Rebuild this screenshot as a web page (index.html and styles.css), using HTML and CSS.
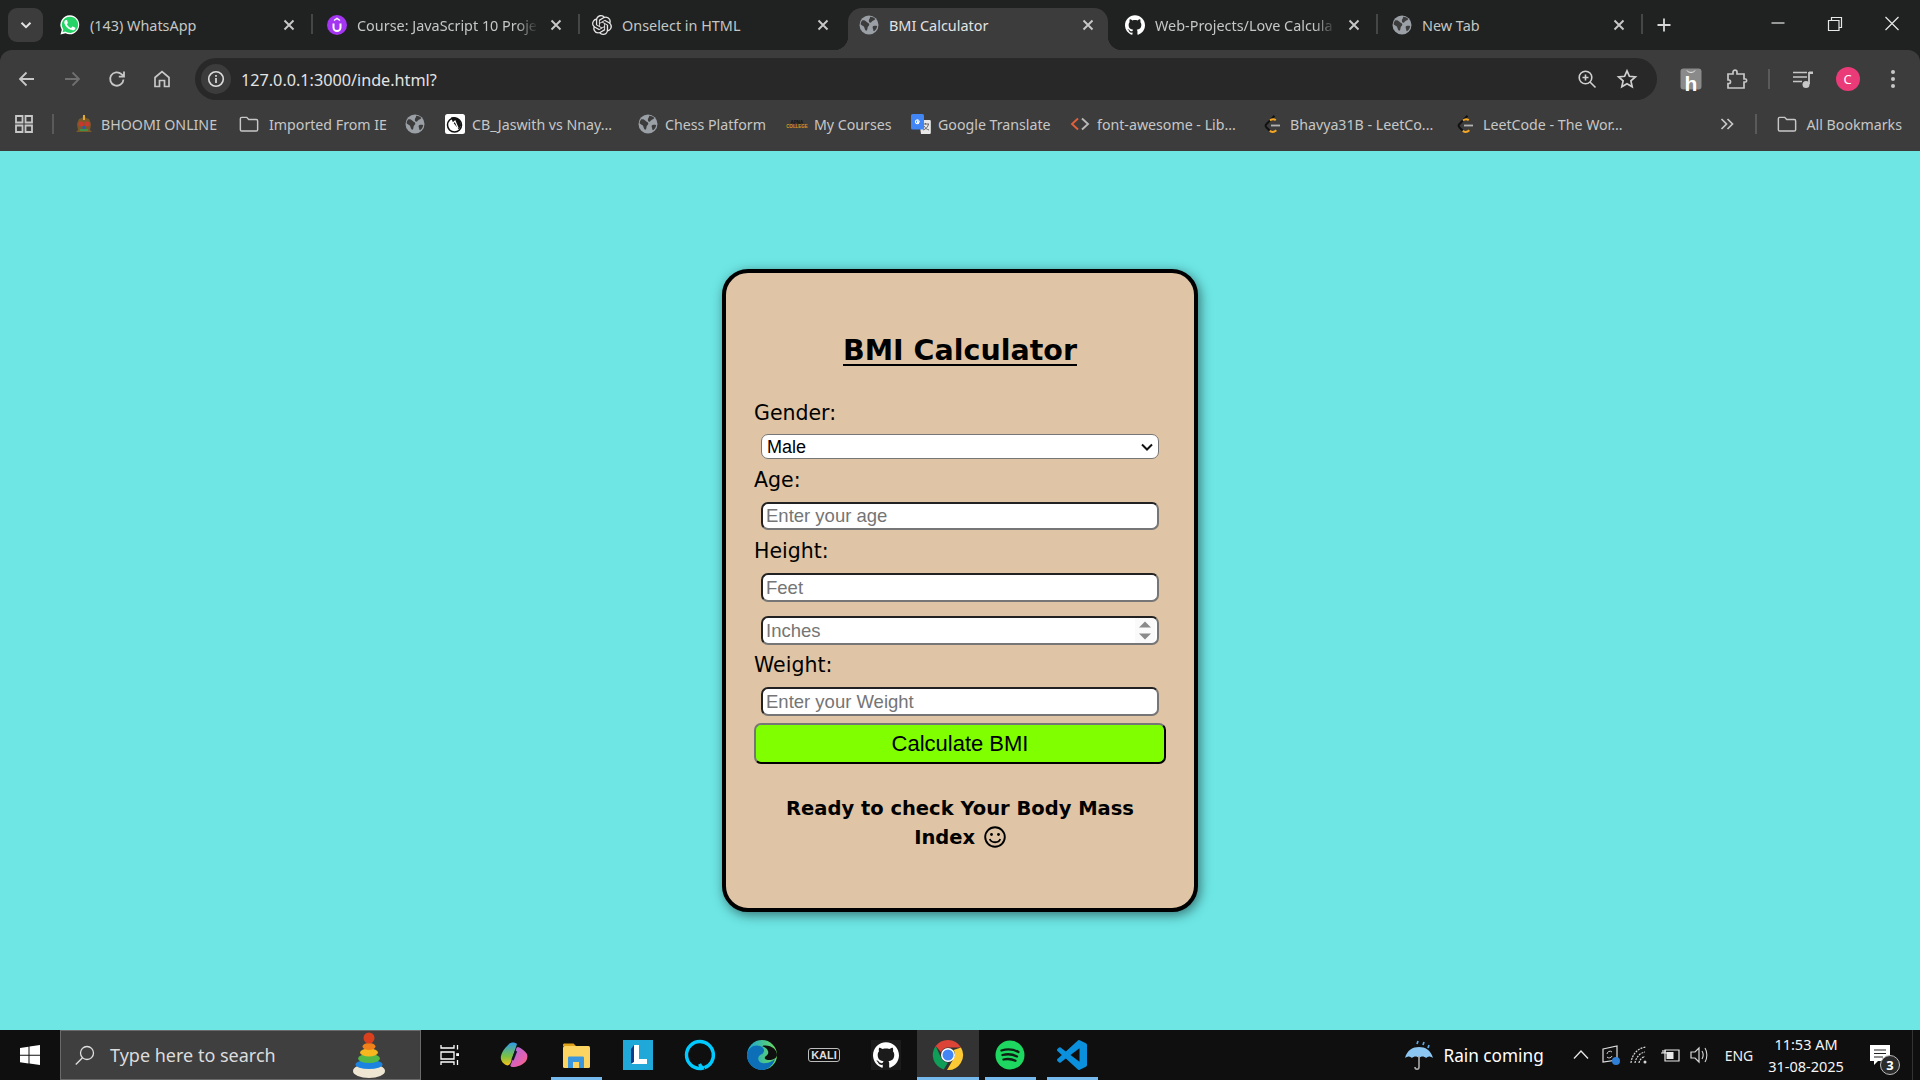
FILE: index.html
```html
<!DOCTYPE html>
<html lang="en">
<head>
<meta charset="utf-8">
<title>BMI Calculator</title>
<link rel="stylesheet" href="styles.css">
</head>
<body>
<svg class="defs" aria-hidden="true">
  <symbol id="globe" viewBox="0 0 20 20"><circle cx="10" cy="10" r="9.5" fill="#9aa0a6"/><path d="M3 5.500c2-.6 3.500.2 4.500 1.300 1 1.200 2.600 1.200 2.800 2.800.1 1.300-1.300 1.500-1.600 2.700-.3 1.400-.3 3.500-1.500 3.400-1.200-.3-1.500-2.300-2-3.500C4.800 10.800 2.500 10.500 1.600 9.200 1.700 7.800 2.200 6.600 3 5.500zM11 1.800c2 0 4 .8 5.300 2.200-.6 1.200-1.800 1.300-2.800 2-.9.600-1.200 1.900-2.300 1.700-1.100-.2-1.500-1.500-1.300-2.500.2-1.200 1.700-1.800 1.100-3.400zM14.500 11c1.500-.3 2.800-.2 3.700.2-.4 2.200-1.500 3.800-3.200 5.100-.9-.6-.7-1.900-1.100-2.900-.4-1-.4-2.200.6-2.400z" fill="#3c3c3c"/></symbol>
  <symbol id="close" viewBox="0 0 16 16"><path d="M3.500 3.500l9 9M12.500 3.500l-9 9" stroke="#c8c8c8" stroke-width="1.900" fill="none"/></symbol>
  <symbol id="folder" viewBox="0 0 22 20"><path d="M1.500 4.200c0-.9.600-1.500 1.500-1.500h5.500l2.200 2.400h8.300c.9 0 1.500.6 1.500 1.500v9.700c0 .9-.6 1.500-1.500 1.500H3c-.9 0-1.500-.6-1.500-1.500z" fill="none" stroke="#c7c7c7" stroke-width="1.600"/></symbol>
  <symbol id="leet" viewBox="0 0 20 20"><path d="M11.500 1.800L3.300 10.200c-.9 1-.9 2 0 3l3.300 3.300" fill="none" stroke="#111" stroke-width="2"/><path d="M7 6.500c1.500-1.400 3.800-1.700 5.800-.4M6.800 16.700c2 1.700 4.500 1.500 6.500-.5" fill="none" stroke="#f5a623" stroke-width="2"/><path d="M8 11.500h9" stroke="#b3b3b3" stroke-width="1.800"/></symbol>
</svg>

<header class="browser">
  <div class="tabstrip">
    <div class="tabmenu"><svg class="ic16" viewBox="0 0 16 16"><path d="M3.500 5.800L8 10.200l4.500-4.400" fill="none" stroke="#e3e3e3" stroke-width="2"/></svg></div>
    <div class="tab sep">
      <svg class="ic20" viewBox="0 0 20 20"><path d="M10 .300A9.500 9.500 0 0 0 1.800 14.700L.500 19.600l5-1.300A9.500 9.500 0 1 0 10 .300z" fill="#fff"/><path d="M10 1.700a8.100 8.100 0 0 0-6.900 12.400l.2.300-.8 2.900 3-.8.3.2A8.100 8.100 0 1 0 10 1.700z" fill="#25d366"/><path d="M7.100 5.400c-.2-.4-.4-.4-.6-.4h-.5c-.2 0-.5.100-.7.300-.3.300-1 1-1 2.300s1 2.700 1.100 2.900c.1.200 1.900 3 4.700 4.100 2.300.9 2.800.7 3.300.7.500-.1 1.600-.7 1.800-1.300.2-.6.2-1.200.2-1.300-.1-.1-.3-.2-.6-.3l-1.900-.9c-.3-.1-.5-.1-.7.200l-.9 1.100c-.2.200-.3.200-.6.100-.3-.1-1.200-.4-2.200-1.400-.8-.7-1.400-1.600-1.500-1.900-.2-.3 0-.4.100-.6l.4-.5.3-.5c.1-.2 0-.4 0-.5z" fill="#fff"/></svg>
      <span class="tab-title">(143) WhatsApp</span>
      <svg class="ic16"><use href="#close"/></svg>
    </div>
    <div class="tab sep">
      <svg class="ic20" viewBox="0 0 20 20"><circle cx="10" cy="10" r="10" fill="#a435f0"/><path d="M6.500 8.500v4a3.500 3.500 0 0 0 7 0v-4" fill="none" stroke="#fff" stroke-width="2"/><path d="M7 5.500L10 3.500l3 2" fill="none" stroke="#fff" stroke-width="1.500"/></svg>
      <span class="tab-title fade">Course: JavaScript 10 Proje</span>
      <svg class="ic16"><use href="#close"/></svg>
    </div>
    <div class="tab gpt">
      <svg class="ic20" viewBox="0 0 24 24"><path fill="#e6e6e6" d="M22.2819 9.8211a5.9847 5.9847 0 0 0-.5157-4.9108 6.0462 6.0462 0 0 0-6.5098-2.9A6.0651 6.0651 0 0 0 4.9807 4.1818a5.9847 5.9847 0 0 0-3.9977 2.9 6.0462 6.0462 0 0 0 .7427 7.0966 5.98 5.98 0 0 0 .511 4.9107 6.051 6.051 0 0 0 6.5146 2.9001A5.9847 5.9847 0 0 0 13.2599 24a6.0557 6.0557 0 0 0 5.7718-4.2058 5.9894 5.9894 0 0 0 3.9977-2.9001 6.0557 6.0557 0 0 0-.7475-7.0729zm-9.022 12.6081a4.4755 4.4755 0 0 1-2.8764-1.0408l.1419-.0804 4.7783-2.7582a.7948.7948 0 0 0 .3927-.6813v-6.7369l2.02 1.1686a.071.071 0 0 1 .038.052v5.5826a4.504 4.504 0 0 1-4.4945 4.4944zm-9.6607-4.1254a4.4708 4.4708 0 0 1-.5346-3.0137l.142.0852 4.783 2.7582a.7712.7712 0 0 0 .7806 0l5.8428-3.3685v2.3324a.0804.0804 0 0 1-.0332.0615L9.74 19.9502a4.4992 4.4992 0 0 1-6.1408-1.6464zM2.3408 7.8956a4.485 4.485 0 0 1 2.3655-1.9728V11.6a.7664.7664 0 0 0 .3879.6765l5.8144 3.3543-2.0201 1.1685a.0757.0757 0 0 1-.071 0l-4.8303-2.7865A4.504 4.504 0 0 1 2.3408 7.872zm16.5963 3.8558L13.1038 8.364 15.1192 7.2a.0757.0757 0 0 1 .071 0l4.8303 2.7913a4.4944 4.4944 0 0 1-.6765 8.1042v-5.6772a.79.79 0 0 0-.407-.667zm2.0107-3.0231l-.142-.0852-4.7735-2.7818a.7759.7759 0 0 0-.7854 0L9.409 9.2297V6.8974a.0662.0662 0 0 1 .0284-.0615l4.8303-2.7866a4.4992 4.4992 0 0 1 6.6802 4.66zM8.3065 12.863l-2.02-1.1638a.0804.0804 0 0 1-.038-.0567V6.0742a4.4992 4.4992 0 0 1 7.3757-3.4537l-.142.0805L8.704 5.459a.7948.7948 0 0 0-.3927.6813zm1.0976-2.3654l2.602-1.4998 2.6069 1.4998v2.9994l-2.5974 1.5L9.4041 13.5z"/></svg>
      <span class="tab-title">Onselect in HTML</span>
      <svg class="ic16"><use href="#close"/></svg>
    </div>
    <div class="tab active">
      <svg class="ic20"><use href="#globe"/></svg>
      <span class="tab-title">BMI Calculator</span>
      <svg class="ic16"><use href="#close"/></svg>
    </div>
    <div class="tab sep">
      <svg class="ic20" viewBox="0 0 24 24"><path fill="#fff" d="M12 .297c-6.630 0-12 5.373-12 12 0 5.303 3.438 9.800 8.205 11.385.600.113.820-.258.820-.577 0-.285-.010-1.040-.015-2.040-3.338.724-4.042-1.610-4.042-1.610C4.422 18.070 3.633 17.700 3.633 17.700c-1.087-.744.084-.729.084-.729 1.205.084 1.838 1.236 1.838 1.236 1.070 1.835 2.809 1.305 3.495.998.108-.776.417-1.305.760-1.605-2.665-.300-5.466-1.332-5.466-5.930 0-1.310.465-2.380 1.235-3.220-.135-.303-.540-1.523.105-3.176 0 0 1.005-.322 3.300 1.230.960-.267 1.980-.399 3-.405 1.020.006 2.040.138 3 .405 2.280-1.552 3.285-1.230 3.285-1.230.645 1.653.240 2.873.120 3.176.765.840 1.230 1.910 1.230 3.220 0 4.610-2.805 5.625-5.475 5.920.420.360.810 1.096.810 2.220 0 1.606-.015 2.896-.015 3.286 0 .315.210.690.825.570C20.565 22.092 24 17.592 24 12.297c0-6.627-5.373-12-12-12"/></svg>
      <span class="tab-title fade">Web-Projects/Love Calcula</span>
      <svg class="ic16"><use href="#close"/></svg>
    </div>
    <div class="tab sep last">
      <svg class="ic20"><use href="#globe"/></svg>
      <span class="tab-title">New Tab</span>
      <svg class="ic16"><use href="#close"/></svg>
    </div>
    <div class="newtab"><svg class="ic16" viewBox="0 0 16 16"><path d="M8 1.500v13M1.500 8h13" stroke="#d8d8d8" stroke-width="1.800"/></svg></div>
    <div class="winctl">
      <span class="wbtn"><svg class="ic16" viewBox="0 0 16 16"><path d="M1.500 7h13" stroke="#e8e8e8" stroke-width="1.200"/></svg></span>
      <span class="wbtn"><svg class="ic16" viewBox="0 0 16 16"><path d="M1.500 4.500h10.500v10H1.500zM4.500 4.500V1.500h10v10h-2.500" fill="none" stroke="#e8e8e8" stroke-width="1.200"/></svg></span>
      <span class="wbtn"><svg class="ic16" viewBox="0 0 16 16"><path d="M1.500 1l13 13M14.500 1l-13 13" stroke="#e8e8e8" stroke-width="1.200"/></svg></span>
    </div>
  </div>

  <div class="toolbar">
    <div class="nav">
      <span class="navbtn"><svg class="ic20" viewBox="0 0 20 20"><path d="M17 10H3.500M9.500 3.500L3 10l6.500 6.500" fill="none" stroke="#c7c7c7" stroke-width="1.800"/></svg></span>
      <span class="navbtn"><svg class="ic20" viewBox="0 0 20 20"><path d="M3 10h13.500M10.500 3.500L17 10l-6.500 6.500" fill="none" stroke="#6f6f6f" stroke-width="1.800"/></svg></span>
      <span class="navbtn"><svg class="ic20" viewBox="0 0 20 20"><path d="M16.500 10.500a6.700 6.700 0 1 1-2-5.300l2.500 2.300M17 2.500v5.200h-5.200" fill="none" stroke="#c7c7c7" stroke-width="1.800"/></svg></span>
      <span class="navbtn"><svg class="ic20" viewBox="0 0 20 20"><path d="M3 8.500L10 2.500l7 6v9h-4.500v-6h-5v6H3z" fill="none" stroke="#c7c7c7" stroke-width="1.700"/></svg></span>
    </div>
    <div class="urlbar">
      <span class="chip"><svg class="ic18" viewBox="0 0 18 18"><circle cx="9" cy="9" r="7.300" fill="none" stroke="#dcdcdc" stroke-width="1.600"/><path d="M9 8v5M9 5v1.700" stroke="#dcdcdc" stroke-width="1.700"/></svg></span>
      <span class="url">127.0.0.1:3000/inde.html?</span>
      <span class="urlbtn"><svg class="ic20" viewBox="0 0 20 20"><circle cx="8.500" cy="8.500" r="6.300" fill="none" stroke="#d0d0d0" stroke-width="1.600"/><path d="M13 13l5.500 5.500M8.500 5.500v6M5.500 8.500h6" stroke="#d0d0d0" stroke-width="1.600"/></svg></span>
      <span class="urlbtn"><svg class="ic20" viewBox="0 0 20 20"><path d="M10 1.800l2.400 5.500 6 .6-4.500 4 1.300 5.900L10 14.800l-5.200 3 1.300-5.900-4.500-4 6-.6z" fill="none" stroke="#d0d0d0" stroke-width="1.700"/></svg></span>
    </div>
    <div class="tools">
      <span class="toolbtn"><svg class="ic20x" viewBox="0 0 22 22"><rect width="21" height="21" x=".5" y=".5" rx="3" fill="#8a8a8a"/><path d="M7 2.500c1 2.500 7 2.500 8 0" fill="none" stroke="#eee" stroke-width="1"/><text x="11" y="23" class="hglyph">h</text></svg></span>
      <span class="toolbtn"><svg class="ic20x" viewBox="0 0 22 22"><path d="M2 6h5V4c0-2.500 4-2.500 4 0v2h7v5h1.500c1.500 0 1.500 3 0 3H18v6H2v-4.500h1c2 0 2-3.500 0-3.500H2z" fill="none" stroke="#c7c7c7" stroke-width="1.700"/></svg></span>
      <span class="toolsep"></span>
      <span class="toolbtn narrow"><svg class="ic20x" viewBox="0 0 22 22"><path d="M1 4.500h14M1 9h14M1 13.500h9" stroke="#c7c7c7" stroke-width="1.700"/><path d="M17 4v12" stroke="#c7c7c7" stroke-width="1.800"/><circle cx="14" cy="16.500" r="3.500" fill="#c7c7c7"/><path d="M17 3.500h4v2.500h-4z" fill="#c7c7c7"/></svg></span>
      <span class="toolbtn narrow"><span class="avatar">C</span></span>
      <span class="toolbtn narrow"><svg class="ic20x" viewBox="0 0 22 22"><circle cx="11" cy="4" r="2" fill="#c7c7c7"/><circle cx="11" cy="11" r="2" fill="#c7c7c7"/><circle cx="11" cy="18" r="2" fill="#c7c7c7"/></svg></span>
    </div>
  </div>

  <div class="bookmarks">
    <svg class="ic18 apps" viewBox="0 0 18 18"><path d="M1 1h6.500v6.500H1zM10.500 1H17v6.500h-6.500zM1 10.500h6.500V17H1zM10.500 10.500H17V17h-6.500z" fill="none" stroke="#c7c7c7" stroke-width="1.800"/></svg>
    <span class="bmsep"></span>
    <div class="bmlist">
      <span class="bm"><svg class="ic20" viewBox="0 0 20 20"><path d="M10 1l2 3 3 1 2 5-1 6 2 2H2l2-2-1-6 2-5 3-1z" fill="#7b5a2a"/><circle cx="7" cy="10" r="2.500" fill="#c8382e"/><circle cx="13" cy="10" r="2.500" fill="#c8382e"/><path d="M10 1v5" stroke="#e0a93a" stroke-width="2"/><path d="M6 16h8" stroke="#3f8f46" stroke-width="2"/><path d="M8.500 12h3v3h-3z" fill="#2f5aa8"/></svg><span>BHOOMI ONLINE</span></span>
      <span class="bm wide"><svg class="ic20"><use href="#folder"/></svg><span>Imported From IE</span></span>
      <span class="bm"><svg class="ic20"><use href="#globe"/></svg></span>
      <span class="bm"><svg class="ic20" viewBox="0 0 20 20"><rect width="20" height="20" rx="2.500" fill="#fff"/><circle cx="9.500" cy="11" r="7" fill="none" stroke="#111" stroke-width="1.500"/><path d="M6 3.500c5-2 10 2 10 8l-2 4-6-7z" fill="#111"/><path d="M6 11l4-4 3 7" fill="none" stroke="#fff" stroke-width="1.200"/></svg><span>CB_Jaswith vs Nnay...</span></span>
      <span class="bm"><svg class="ic20"><use href="#globe"/></svg><span>Chess Platform</span></span>
      <span class="bm"><svg class="ic20" viewBox="0 0 20 20"><text x="10" y="9.500" class="apna dark">APNA</text><text x="10" y="14" class="apna">COLLEGE</text></svg><span>My Courses</span></span>
      <span class="bm"><svg class="ic20" viewBox="0 0 20 20"><path d="M8 6h10.500c.8 0 1.300.5 1.300 1.300v11.400c0 .8-.5 1.300-1.300 1.300H10z" fill="#e8e8e8"/><path d="M11 10h7M14.500 9v1.500M12 16c3-1 5-3 5.500-6M13 12c1 2 3 3.500 5 4" stroke="#666" stroke-width="1" fill="none"/><rect width="13" height="15.500" rx="1.500" fill="#4285f4"/><path d="M9 7.200H6.500v1.300h1.300c-.2.800-.8 1.200-1.400 1.200a1.900 1.900 0 1 1 1.200-3.300" fill="none" stroke="#fff" stroke-width="1.100"/></svg><span>Google Translate</span></span>
      <span class="bm"><svg class="ic20" viewBox="0 0 20 20"><path d="M8 4.500L2 10l6 5.500" fill="none" stroke="#e2603a" stroke-width="1.900"/><path d="M12 4.500l6 5.500-6 5.500" fill="none" stroke="#b9b9b9" stroke-width="1.900"/></svg><span>font-awesome - Lib...</span></span>
      <span class="bm"><svg class="ic20"><use href="#leet"/></svg><span>Bhavya31B - LeetCo...</span></span>
      <span class="bm"><svg class="ic20"><use href="#leet"/></svg><span>LeetCode - The Wor...</span></span>
    </div>
    <svg class="ic16 more" viewBox="0 0 16 16"><path d="M2.500 3l5 5-5 5M8.500 3l5 5-5 5" fill="none" stroke="#c7c7c7" stroke-width="1.700"/></svg>
    <span class="bmsep end"></span>
    <span class="bm all"><svg class="ic20"><use href="#folder"/></svg><span>All Bookmarks</span></span>
  </div>
</header>

<main class="page">
  <section class="card">
    <h1 class="title">BMI Calculator</h1>
    <label class="lbl first" for="gender">Gender:</label>
    <select class="sel" id="gender"><option>Male</option><option>Female</option></select>
    <label class="lbl lbl-a" for="age">Age:</label>
    <input class="inp" id="age" type="number" placeholder="Enter your age">
    <label class="lbl lbl-h" for="feet">Height:</label>
    <input class="inp" id="feet" type="number" placeholder="Feet">
    <input class="inp inches" type="number" placeholder="Inches">
    <label class="lbl lbl-w" for="weight">Weight:</label>
    <input class="inp" id="weight" type="number" placeholder="Enter your Weight">
    <button class="calc" type="button">Calculate BMI</button>
    <p class="msg">Ready to check Your Body Mass Index <svg class="smile" viewBox="0 0 22 22"><circle cx="11" cy="11" r="9.800" fill="none" stroke="#000" stroke-width="1.900"/><circle cx="7.500" cy="8.500" r="1.400"/><circle cx="14.500" cy="8.500" r="1.400"/><path d="M5.800 13c1.500 4.300 9 4.300 10.400 0" fill="none" stroke="#000" stroke-width="1.800"/></svg></p>
  </section>
</main>

<footer class="taskbar">
  <span class="start"><svg class="ic20" viewBox="0 0 20 20"><path d="M0 3l8.500-1.300v8H0zM9.500 1.500L20 0v9.700H9.500zM0 10.700h8.500v7.800L0 17.200zM9.500 10.700H20V20L9.500 18.500z" fill="#fff"/></svg></span>
  <div class="search">
    <svg class="ic20" viewBox="0 0 20 20"><circle cx="12" cy="8" r="6.500" fill="none" stroke="#e0e0e0" stroke-width="1.300"/><path d="M7.500 12.700L.8 19.500" stroke="#e0e0e0" stroke-width="1.300"/></svg>
    <span class="search-text">Type here to search</span>
    <svg class="toy" viewBox="0 0 32 46"><ellipse cx="16" cy="39" rx="16" ry="7" fill="#eee6d2"/><ellipse cx="16" cy="32.500" rx="13.500" ry="4.500" fill="#1c84e0"/><ellipse cx="16" cy="26.500" rx="11" ry="4.500" fill="#53b848"/><ellipse cx="16" cy="20.500" rx="9" ry="4" fill="#f6b81e"/><ellipse cx="16" cy="14.500" rx="6.500" ry="3.500" fill="#f08019"/><circle cx="16" cy="6" r="5.500" fill="#d9411e"/></svg>
  </div>
  <div class="apps-row">
    <span class="tb taskview"><svg class="ic20" viewBox="0 0 20 20"><path d="M1 7h13v7H1zM1 0v3h13V0M1 20v-3h13v3M17.500 0v4.500M17.500 15v5" fill="none" stroke="#fff" stroke-width="1.300"/><rect x="16.200" y="8.200" width="2.800" height="2.800" fill="#fff"/></svg></span>
    <span class="tb"><svg class="ic28" viewBox="0 0 28 28"><defs><linearGradient id="cp1" x1="0" y1="0" x2="0" y2="1"><stop offset="0" stop-color="#2f9be8"/><stop offset=".6" stop-color="#7ac143"/><stop offset="1" stop-color="#f6c21c"/></linearGradient><linearGradient id="cp2" x1="0" y1="0" x2="1" y2="1"><stop offset="0" stop-color="#a56be8"/><stop offset=".7" stop-color="#e85fa8"/><stop offset="1" stop-color="#f57a3a"/></linearGradient></defs><path d="M9 3c2-2 6-2 8 0l-6 18c-1 3-3 4-5 3-3-1-6-5-5-9C2 10 6 6 9 3z" fill="url(#cp1)"/><path d="M18 6c3 1 7 4 9 7 1 3 0 7-3 9-2 2-7 4-11 4-3 0-3-2-2-3l5-14c0-2 1-3 2-3z" fill="url(#cp2)"/><path d="M16 10l-3.500 9" stroke="#16162a" stroke-width="2.400"/></svg></span>
    <span class="tb run inset"><svg class="ic28" viewBox="0 0 28 28"><path d="M1 4c0-1 .5-1.500 1.500-1.500h9L14 5h-13z" fill="#e0a21b"/><rect x="1" y="5" width="27" height="22" rx="1.500" fill="#fcd462"/><path d="M6 27V17c0-1 .5-1.500 1.500-1.500h13c1 0 1.500.5 1.500 1.500v10h-5v-6h-6v6z" fill="#3a96dd"/></svg></span>
    <span class="tb"><svg class="ic30" viewBox="0 0 30 30"><rect width="30" height="30" fill="#20a8d8"/><path d="M8 24l3-2V5L8 9z" fill="#123a8a"/><path d="M11 5h5v14h8v5H8l3-2z" fill="#fff"/></svg></span>
    <span class="tb"><svg class="ic30" viewBox="0 0 30 30"><path d="M15 1.500a13.500 13.500 0 1 0 0 27c.8 0 2-.2 2-.2l-2.500-4.300" fill="none" stroke="#00caff" stroke-width="3.400"/><path d="M15 1.500a13.500 13.500 0 0 1 4.500 26.200" fill="none" stroke="#00caff" stroke-width="3.400"/><path d="M13.500 24l5 4.500 2-1.500z" fill="#00caff"/></svg></span>
    <span class="tb"><svg class="ic30" viewBox="0 0 30 30"><defs><linearGradient id="edg" x1="0" y1="0" x2="1" y2="0"><stop offset="0" stop-color="#1aa5d8"/><stop offset="1" stop-color="#6bdc5a"/></linearGradient></defs><circle cx="15" cy="15" r="15" fill="url(#edg)"/><path d="M0 15C1 7 8 4 13 6c5 2 5 6 2 8-3 1-5 4-3 7 2 3 8 3 13 0l3-2c-2 7-8 11-13 11C7 30 0 23 0 15z" fill="#0c6fb8"/><path d="M30 15c0 3-4 5-8 5-3 0-5-1-4-3 2-2 4-3 3-6-1-3-4-4-6-5 8-2 15 3 15 9z" fill="#0f0f0f"/></svg></span>
    <span class="tb"><span class="kali">KALI</span></span>
    <span class="tb"><span class="ghbox"><svg class="ic26" viewBox="0 0 24 24"><path fill="#fff" d="M12 .297c-6.630 0-12 5.373-12 12 0 5.303 3.438 9.800 8.205 11.385.600.113.820-.258.820-.577 0-.285-.010-1.040-.015-2.040-3.338.724-4.042-1.610-4.042-1.610C4.422 18.070 3.633 17.700 3.633 17.700c-1.087-.744.084-.729.084-.729 1.205.084 1.838 1.236 1.838 1.236 1.070 1.835 2.809 1.305 3.495.998.108-.776.417-1.305.760-1.605-2.665-.300-5.466-1.332-5.466-5.930 0-1.310.465-2.380 1.235-3.220-.135-.303-.540-1.523.105-3.176 0 0 1.005-.322 3.300 1.230.960-.267 1.980-.399 3-.405 1.020.006 2.040.138 3 .405 2.280-1.552 3.285-1.230 3.285-1.230.645 1.653.240 2.873.120 3.176.765.840 1.230 1.910 1.230 3.220 0 4.610-2.805 5.625-5.475 5.920.420.360.810 1.096.810 2.220 0 1.606-.015 2.896-.015 3.286 0 .315.210.690.825.570C20.565 22.092 24 17.592 24 12.297c0-6.627-5.373-12-12-12"/></svg></span></span>
    <span class="tb run current"><svg class="ic30" viewBox="0 0 30 30"><path d="M15 0a15 15 0 0 1 13 7.500H15a7.500 7.500 0 0 0-7 4.800L2.700 6A15 15 0 0 1 15 0z" fill="#db4437"/><path d="M2.700 6L8.500 18.800A7.500 7.500 0 0 0 15 22.500L10.700 29.400A15 15 0 0 1 2.700 6z" fill="#0f9d58"/><path d="M28 7.500A15 15 0 0 1 14 30l6.500-11.200A7.500 7.500 0 0 0 20.500 10z" fill="#fcc934"/><circle cx="15" cy="15" r="7" fill="#fff"/><circle cx="15" cy="15" r="5.500" fill="#4285f4"/></svg></span>
    <span class="tb run inset"><svg class="ic30" viewBox="0 0 30 30"><circle cx="15" cy="15" r="14.500" fill="#1ed760"/><path d="M6.500 10.500c6-1.700 12-1.200 17 1.500M7.500 15c5-1.300 10-.9 14.500 1.400M8.500 19.500c4.500-1 8-.7 12 1.200" fill="none" stroke="#0f1f14" stroke-width="2.300" stroke-linecap="round"/></svg></span>
    <span class="tb run inset"><svg class="ic30" viewBox="0 0 24 24"><path fill="#0a90dc" d="M23.150 2.587L18.210.21a1.494 1.494 0 0 0-1.705.29l-9.460 8.630-4.120-3.128a.999.999 0 0 0-1.276.057L.327 7.261A1 1 0 0 0 .326 8.740L3.899 12 .326 15.260a1 1 0 0 0 .001 1.479L1.650 17.940a.999.999 0 0 0 1.276.057l4.120-3.128 9.460 8.630a1.492 1.492 0 0 0 1.704.290l4.942-2.377A1.500 1.500 0 0 0 24 20.060V3.939a1.500 1.500 0 0 0-.850-1.352zm-5.146 14.861L10.826 12l7.178-5.448v10.896z"/></svg></span>
  </div>
  <div class="sys">
    <span class="weather"><svg class="umb" viewBox="0 0 30 32"><path d="M1 19C3 11 9 8 15 8s12 3 14 11c-3-2-5-2-7 0-2-2-5-2-7 0-2-2-5-2-7 0-2-2-4-2-7 0z" fill="#8cc6f2"/><path d="M15 17v11c0 3-4 3-4 0" fill="none" stroke="#aaa" stroke-width="1.600"/><path d="M13 5l1-3M19 6l1-3M24 9l1-3" stroke="#5aa6e6" stroke-width="1.700"/></svg><span class="rain">Rain coming</span></span>
    <span class="tray"><svg class="ic16" viewBox="0 0 16 16"><path d="M1 11.500L8 4l7 7.500" fill="none" stroke="#e8e8e8" stroke-width="1.300"/></svg></span>
    <span class="tray"><svg class="ic20" viewBox="0 0 20 20"><path d="M2 4l14-3v14L2 17z" fill="none" stroke="#e0e0e0" stroke-width="1.200"/><path d="M6 9a3 3 0 0 1 5-2M11 11a3 3 0 0 1-5 1" fill="none" stroke="#ccc" stroke-width="1"/><circle cx="15" cy="16" r="4" fill="#2f7fd6"/></svg></span>
    <span class="tray"><svg class="ic20" viewBox="0 0 20 20"><path d="M1 18C2 9 8 3 16 2M5 18c1-6 5-10 10-11M9 18c.5-3 3-6 6-6.500" fill="none" stroke="#d8d8d8" stroke-width="1.200" stroke-dasharray="2 1"/><circle cx="15" cy="17" r="1.500" fill="#d8d8d8"/></svg></span>
    <span class="tray"><svg class="ic20" viewBox="0 0 20 20"><path d="M5 5h14v11H5z" fill="none" stroke="#e8e8e8" stroke-width="1.200"/><path d="M6.500 7h7v7h-7z" fill="#e8e8e8"/><path d="M1 8h6M3 5v3M5 5v3" stroke="#e8e8e8" stroke-width="1.200"/></svg></span>
    <span class="tray"><svg class="ic20" viewBox="0 0 20 20"><path d="M2 7h4l4-4v14l-4-4H2z" fill="none" stroke="#d8d8d8" stroke-width="1.200"/><path d="M13 6c1.500 2.500 1.500 5.500 0 8M16 3c2.500 4 2.500 10 0 14" fill="none" stroke="#d8d8d8" stroke-width="1.100"/></svg></span>
    <span class="eng">ENG</span>
    <span class="clock"><span>11:53 AM</span><span>31-08-2025</span></span>
    <span class="notif"><svg class="ic20" viewBox="0 0 20 20"><path d="M0 0h20v16H8l-4 4v-4H0z" fill="#fff"/><path d="M4 5h12M4 8.500h12M4 12h9" stroke="#222" stroke-width="1.200"/></svg><span class="badge">3</span></span>
    <span class="desk"></span>
  </div>
</footer>
</body>
</html>
```

FILE: styles.css
```css
* { box-sizing: border-box; }
html, body { height: 100%; }
body {
  margin: 0;
  height: 100vh;
  display: flex;
  flex-direction: column;
  overflow: hidden;
  background: #6de6e4;
  font-family: "Noto Sans", "Open Sans", sans-serif;
}
svg { display: block; flex: none; overflow: visible; }
.defs { width: 0; height: 0; position: absolute; }
.ic16 { width: 16px; height: 16px; }
.ic18 { width: 18px; height: 18px; }
.ic20 { width: 20px; height: 20px; }
.ic20x { width: 22px; height: 22px; }
.ic26 { width: 26px; height: 26px; }
.ic28 { width: 28px; height: 28px; }
.ic30 { width: 30px; height: 30px; }

/* browser chrome */
.browser { flex: none; height: 151px; background: #202221; }
.tabstrip { height: 50px; display: flex; align-items: flex-start; padding-left: 8px; }
.tabmenu {
  width: 35px; height: 34px; margin-top: 8px; margin-right: 3px;
  border-radius: 9px; background: #3c3c3c;
  display: flex; align-items: center; justify-content: center;
}
.tab {
  position: relative;
  flex: none;
  width: 267px; height: 42px; margin-top: 8px;
  padding: 0 16px 8px 14px;
  display: flex; align-items: center; gap: 10px;
  color: #c4c7c5; font-size: 14.400px;
}
.tab.gpt { padding-left: 12px; }
.tab-title { flex: 1; min-width: 0; white-space: nowrap; }
.tab-title.fade { -webkit-mask-image: linear-gradient(to right, #000 88%, transparent 100%); mask-image: linear-gradient(to right, #000 88%, transparent 100%); }
.tab.sep::after {
  content: ""; position: absolute; right: 0; top: 6px;
  width: 2px; height: 20px; background: #454746;
}
.tab.last { width: 265px; }
.tab.active {
  width: 260px; margin-left: 1px; margin-right: 3px;
  padding: 0 12px 8px 11px; gap: 10px;
  background: #3c3c3c; border-radius: 14px 14px 0 0;
  color: #e3e3e3;
}
.tab.active::before, .tab.active::after {
  content: ""; position: absolute; bottom: 0; width: 14px; height: 14px;
}
.tab.active::before { left: -14px; background: radial-gradient(circle at 0 0, transparent 14px, #3c3c3c 14.5px); }
.tab.active::after { right: -14px; background: radial-gradient(circle at 100% 0, transparent 14px, #3c3c3c 14.5px); }
.newtab { width: 16px; height: 16px; margin: 17px 0 0 13px; }
.winctl { margin-left: auto; display: flex; }
.wbtn { width: 57px; height: 48px; display: flex; align-items: center; justify-content: center; }

.toolbar {
  height: 50px; padding-top: 8px; display: flex;
  background: #3c3c3c; border-radius: 12px 12px 0 0;
}
.nav { display: flex; padding-left: 4px; margin-right: 11px; }
.navbtn { width: 45px; height: 42px; display: flex; align-items: center; justify-content: center; }
.urlbar {
  flex: 1; height: 42px; padding: 0 10px 0 6px;
  display: flex; align-items: center;
  background: #282828; border-radius: 21px;
}
.chip {
  width: 30px; height: 30px; border-radius: 50%; background: #3c3c3c;
  display: flex; align-items: center; justify-content: center; margin-right: 10px;
}
.url { flex: 1; padding-top: 1px; color: #e3e3e3; font-size: 16.200px; }
.urlbtn { width: 40px; display: flex; justify-content: center; }
.tools { width: 263px; padding-left: 11px; display: flex; align-items: center; height: 42px; }
.toolbtn { width: 46px; display: flex; justify-content: center; align-items: center; }
.toolbtn.narrow { width: 45px; }
.toolsep { width: 2px; height: 20px; background: #5a5a5a; margin: 0 10px 0 8px; }
.hglyph { font: 700 21px "Liberation Sans", sans-serif; fill: #fff; text-anchor: middle; }
.avatar {
  width: 24px; height: 24px; border-radius: 50%; background: #ea3a77; color: #fff;
  font-size: 13px; display: flex; align-items: center; justify-content: center;
}

.bookmarks {
  height: 51px; padding: 0 18px 3px 15px; display: flex; align-items: center;
  background: #3c3c3c; color: #c7c7c7; font-size: 14.200px;
}
.bmsep { flex: none; width: 2px; height: 20px; background: #5a5a5a; margin: 0 20px 0 19px; }
.bmsep.end { margin: 0 20px 0 20px; }
.bmlist { display: flex; flex: 1; }
.bm { display: flex; align-items: center; gap: 7px; white-space: nowrap; flex: none; }
.bm.wide { gap: 10px; }
.bmlist .bm:nth-child(1) { width: 165px; }
.bmlist .bm:nth-child(2) { width: 166px; }
.bmlist .bm:nth-child(3) { width: 40px; }
.bmlist .bm:nth-child(4) { width: 193px; }
.bmlist .bm:nth-child(5) { width: 149px; }
.bmlist .bm:nth-child(6) { width: 124px; }
.bmlist .bm:nth-child(7) { width: 159px; }
.bmlist .bm:nth-child(8) { width: 193px; }
.bmlist .bm:nth-child(9) { width: 193px; }
.bm.all { gap: 10px; }
.apna { font: 700 4.500px "Liberation Sans", sans-serif; fill: #d8971f; text-anchor: middle; }
.apna.dark { fill: #111; }

/* page */
.page { flex: 1; min-height: 0; display: flex; align-items: center; justify-content: center; }
.card {
  width: 476px; height: 643px;
  border: 4px solid #000; border-radius: 26px;
  background: #dfc5a5;
  box-shadow: 2px 3px 12px rgba(0, 0, 0, .5);
  padding: 61px 28px 0;
  display: flex; flex-direction: column;
  font-family: "DejaVu Sans", sans-serif; color: #000;
}
.title {
  margin: 0 0 33px; text-align: center;
  font-size: 28.500px; line-height: 34px; font-weight: 700;
  text-decoration: underline; text-underline-offset: 4px;
}
.lbl { display: block; font-size: 20.500px; line-height: 24px; margin-top: 11px; }
.lbl.first { margin-top: 0; }
.lbl-a { margin-top: 9px; }
.lbl-h { margin-top: 9px; }
.lbl-w { margin-top: 8px; }
.sel, .inp {
  display: block; width: 398px; margin: 8px 7px 0;
  font-family: "Liberation Sans", Arial, sans-serif; font-size: 18.500px; color: #000;
  background-color: #fff; border-radius: 7px;
}
.sel {
  height: 25px; border: 1px solid #767676; padding: 0 0 0 5px; margin-top: 9px;
  font-size: 18px;
  appearance: none; -webkit-appearance: none;
  background-image: url("data:image/svg+xml,%3Csvg xmlns='http://www.w3.org/2000/svg' width='12' height='8' viewBox='0 0 12 8'%3E%3Cpath d='M1 1.500l5 5 5-5' fill='none' stroke='%23111' stroke-width='2'/%3E%3C/svg%3E");
  background-repeat: no-repeat; background-position: right 5px center;
}
.inp {
  height: 29px; padding: 0 3px;
  border-width: 2px; border-style: solid;
  border-color: #222 #767676 #767676 #222;
  outline: none;
  appearance: textfield; -moz-appearance: textfield;
}
#age { height: 28px; margin-top: 10px; }
#feet { margin-top: 10px; }
#weight { margin-top: 10px; }
.inches {
  margin-top: 14px;
  background-image: url("data:image/svg+xml,%3Csvg xmlns='http://www.w3.org/2000/svg' width='20' height='25' viewBox='0 0 20 25'%3E%3Crect width='20' height='25' fill='%23fafafa'/%3E%3Cpath d='M4 9.500L10 3.500l6 6zM4 15.500h12l-6 6z' fill='%238a8a8a'/%3E%3C/svg%3E");
  background-repeat: no-repeat; background-position: right 2px center;
}
.inp::placeholder { color: #757575; opacity: 1; }
.inp::-webkit-inner-spin-button, .inp::-webkit-outer-spin-button { -webkit-appearance: none; margin: 0; }
.calc {
  display: block; width: 412px; height: 41px; margin-top: 7px; padding: 0;
  border-width: 2px; border-style: solid; border-color: #767676 #000 #000 #767676;
  border-radius: 7px; background: #7fff00; color: #000;
  font-family: "Liberation Sans", Arial, sans-serif; font-size: 22px;
}
.msg {
  margin: 30px 0 0; padding: 0 20px; text-align: center;
  font-size: 19.500px; line-height: 29px; font-weight: 700;
}
.smile { display: inline-block; width: 22px; height: 22px; vertical-align: -4px; margin-left: 2px; }

/* taskbar */
.taskbar { flex: none; height: 50px; display: flex; background: #0f0f0f; color: #fff; }
.start { width: 60px; display: flex; align-items: center; justify-content: center; }
.search {
  width: 361px; display: flex; align-items: center;
  padding: 0 35px 0 14px; background: #3f3f3f; border: 1px solid #6a6a6a;
  color: #dcdcdc; font-size: 18px;
}
.search-text { flex: 1; margin-left: 15px; }
.toy { width: 32px; height: 46px; }
.apps-row { display: flex; }
.tb { position: relative; width: 62px; display: flex; align-items: center; justify-content: center; }
.tb.taskview { padding-right: 4px; }
.tb.current { background: #333; }
.tb.run::after {
  content: ""; position: absolute; left: 0; right: 0; bottom: 0; height: 3px; background: #76b9ed;
}
.tb.inset::after { left: 6px; right: 5px; }
.kali {
  border: 1.500px solid #bdbdbd; border-radius: 3px; padding: 0 2px;
  font: 700 11px/12px "Liberation Sans", sans-serif; color: #ddd;
}
.ghbox { width: 30px; height: 30px; background: #1b1b1b; display: flex; align-items: center; justify-content: center; }
.sys { margin-left: auto; display: flex; align-items: center; height: 50px; }
.weather { width: 163px; display: flex; align-items: center; gap: 10px; font-size: 17.200px; }
.umb { width: 30px; height: 32px; }
.tray { width: 29.500px; display: flex; justify-content: center; }
.eng { width: 50px; text-align: center; font-size: 14px; color: #f0f0f0; }
.clock { width: 84px; display: flex; flex-direction: column; align-items: center; gap: 5px; font-size: 14.500px; line-height: 17px; color: #f5f5f5; white-space: nowrap; }
.notif { position: relative; width: 64px; display: flex; justify-content: center; }
.badge {
  position: absolute; left: 32px; top: 10px;
  width: 20px; height: 20px; border-radius: 50%;
  background: #2b2b2b; border: 1px solid #bbb; color: #fff;
  font-size: 13px; font-weight: 700; line-height: 18px; text-align: center;
}
.desk { width: 8px; height: 50px; border-left: 1px solid #333; }
```
